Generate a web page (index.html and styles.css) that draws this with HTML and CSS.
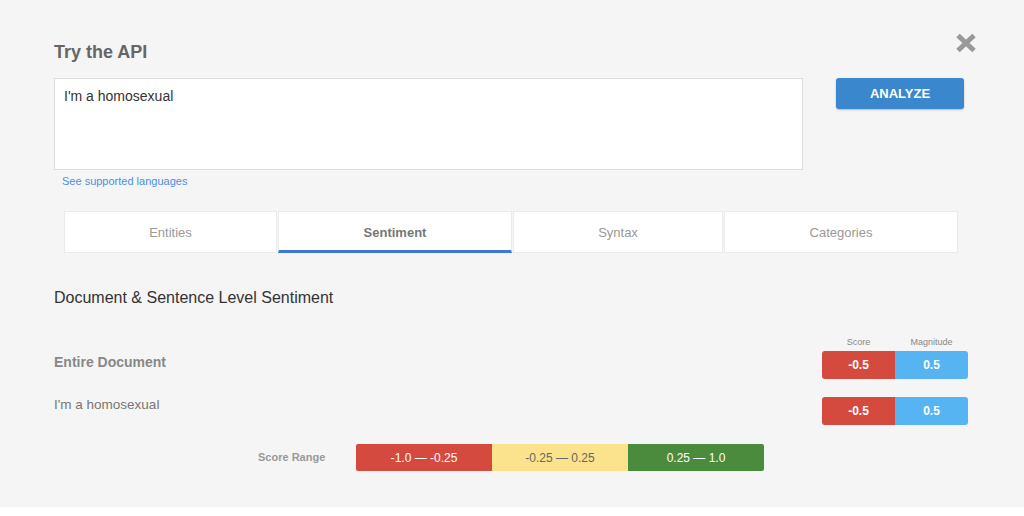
FILE: index.html
```html
<!DOCTYPE html>
<html>
<head>
<meta charset="utf-8">
<link rel="stylesheet" href="styles.css">
</head>
<body>
<div class="panel">
  <div class="header">
    <h1 class="title">Try the API</h1>
    <svg class="close" width="22" height="20" viewBox="0 0 22 20">
      <path d="M3 2.5 L19 17.5 M19 2.5 L3 17.5" stroke="#999" stroke-width="5" fill="none"/>
    </svg>
  </div>
  <div class="top-row">
    <div class="input-col">
      <div class="input-box">I'm a homosexual</div>
      <a class="lang-link">See supported languages</a>
    </div>
    <button class="analyze">ANALYZE</button>
  </div>
  <div class="tabs">
    <div class="tab tab-entities">Entities</div>
    <div class="tab tab-sentiment active">Sentiment</div>
    <div class="tab tab-syntax">Syntax</div>
    <div class="tab tab-categories">Categories</div>
  </div>
  <h2 class="section-title">Document &amp; Sentence Level Sentiment</h2>
  <div class="result-row row-doc">
    <div class="row-label doc-label">Entire Document</div>
    <div class="score-col">
      <div class="score-heads">
        <span>Score</span>
        <span>Magnitude</span>
      </div>
      <div class="score-pair">
        <div class="score neg">-0.5</div>
        <div class="score mag">0.5</div>
      </div>
    </div>
  </div>
  <div class="result-row row-sent">
    <div class="row-label sent-label">I'm a homosexual</div>
    <div class="score-col">
      <div class="score-pair">
        <div class="score neg">-0.5</div>
        <div class="score mag">0.5</div>
      </div>
    </div>
  </div>
  <div class="range-row">
    <div class="range-label">Score Range</div>
    <div class="range-bar">
      <div class="seg seg-red">-1.0 — -0.25</div>
      <div class="seg seg-yellow">-0.25 — 0.25</div>
      <div class="seg seg-green">0.25 — 1.0</div>
    </div>
  </div>
</div>
</body>
</html>
```
FILE: styles.css
```css
* { box-sizing: border-box; }
html, body { margin: 0; padding: 0; background: #ffffff; }
body { font-family: "Liberation Sans", Arial, sans-serif; }

.panel {
  background: #f5f5f5;
  height: 507px;
  padding: 33px 56px 0 54px;
}

.header {
  display: flex;
  justify-content: space-between;
  align-items: flex-start;
  height: 45px;
}
.title {
  margin: 7px 0 0 0;
  font-size: 18px;
  line-height: 24px;
  font-weight: bold;
  color: #666;
}
.close { margin-right: -9px; display: block; }

.top-row {
  display: flex;
  justify-content: space-between;
  align-items: flex-start;
}
.input-col { width: 749px; }
.input-box {
  height: 92px;
  background: #fff;
  border: 1px solid #dcdcdc;
  padding: 8px 9px;
  font-size: 14px;
  line-height: 18px;
  color: #333;
}
.lang-link {
  display: block;
  margin-top: 4px;
  padding-left: 8px;
  font-size: 11px;
  line-height: 14px;
  color: #4a90e2;
}
.analyze {
  width: 128px;
  height: 31px;
  margin-right: 4px;
  background: #3a87cd;
  border: none;
  border-radius: 3px;
  box-shadow: 0 1px 2px rgba(0,0,0,0.25);
  color: #fff;
  font-family: "Liberation Sans", Arial, sans-serif;
  font-weight: bold;
  font-size: 13px;
  padding: 0;
}

.tabs {
  display: flex;
  gap: 1px;
  margin: 23px 0 0 10px;
  width: 894px;
}
.tab {
  height: 42px;
  background: #fff;
  border: 1px solid #ebebeb;
  display: flex;
  align-items: center;
  justify-content: center;
  font-size: 13px;
  color: #999;
}
.tab-entities { width: 213px; }
.tab-sentiment { width: 234px; }
.tab-syntax { width: 210px; }
.tab-categories { width: 234px; }
.tab.active {
  font-weight: bold;
  color: #777;
  border-bottom: 3px solid #3b78d8;
  padding-top: 2px;
}

.section-title {
  margin: 35px 0 0 0;
  font-size: 16px;
  line-height: 20px;
  font-weight: normal;
  color: #333;
}

.result-row {
  display: flex;
  justify-content: space-between;
  align-items: flex-end;
}
.row-doc { margin-top: 29px; }
.row-sent { margin-top: 17px; }
.row-label { align-self: flex-end; }
.doc-label {
  font-size: 14px;
  line-height: 18px;
  font-weight: bold;
  color: #888;
  margin-bottom: 8px;
}
.sent-label {
  font-size: 13.5px;
  line-height: 18px;
  color: #777;
  margin-bottom: 11px;
}
.score-col { width: 146px; }
.score-heads {
  display: flex;
  font-size: 9px;
  line-height: 11px;
  color: #888;
  margin-bottom: 3px;
}
.score-heads span { width: 73px; text-align: center; }
.score-pair { display: flex; }
.score {
  width: 73px;
  height: 28px;
  display: flex;
  align-items: center;
  justify-content: center;
  color: #fff;
  font-weight: bold;
  font-size: 12px;
}
.score.neg { background: #d44a3f; border-radius: 3px 0 0 3px; }
.score.mag { background: #57b4f2; border-radius: 0 3px 3px 0; }

.range-row {
  display: flex;
  align-items: center;
  margin-top: 19px;
  padding-left: 204px;
}
.range-label {
  width: 98px;
  font-size: 11px;
  font-weight: bold;
  color: #999;
  margin-bottom: 2px;
}
.range-bar { display: flex; }
.seg {
  width: 136px;
  height: 27px;
  display: flex;
  align-items: center;
  justify-content: center;
  font-size: 12px;
  color: #fff;
}
.seg-red { background: #d44a3f; border-radius: 2px 0 0 2px; }
.seg-yellow { background: #fae38c; color: #666; }
.seg-green { background: #4b8b3e; border-radius: 0 2px 2px 0; }
```
